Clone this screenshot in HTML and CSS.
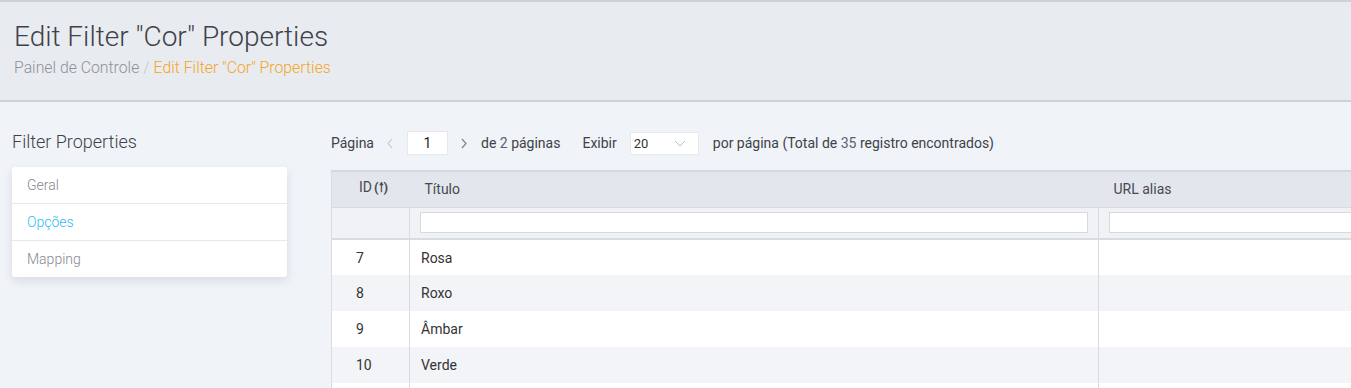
FILE: index.html
```html
<!DOCTYPE html>
<html lang="pt">
<head>
<meta charset="utf-8">
<title>Edit Filter "Cor" Properties</title>
<link rel="stylesheet" href="styles.css">
</head>
<body>
<header class="page-header">
  <h1 class="page-title">Edit Filter "Cor" Properties</h1>
  <div class="breadcrumb"><span class="crumb">Painel de Controle</span><span class="sep">/</span><span class="crumb-active">Edit Filter "Cor" Properties</span></div>
</header>
<main class="main">
  <aside class="sidebar">
    <h2 class="side-title">Filter Properties</h2>
    <ul class="side-menu">
      <li class="side-item">Geral</li>
      <li class="side-item active">Opções</li>
      <li class="side-item">Mapping</li>
    </ul>
  </aside>
  <section class="content">
    <div class="pager">
      <span class="pg-label">Página</span>
      <span class="pg-arrow"><svg width="8" height="11" viewBox="0 0 8 11"><path d="M6 1L2 5.5 6 10" fill="none" stroke="#cdd1d7" stroke-width="1.2"/></svg></span>
      <span class="pg-input">1</span>
      <span class="pg-arrow"><svg width="8" height="11" viewBox="0 0 8 11"><path d="M2 1l4 4.5L2 10" fill="none" stroke="#7d838d" stroke-width="1.2"/></svg></span>
      <span class="pg-label">de <span class="num">2</span> páginas</span>
      <span class="pg-label pg-show">Exibir</span>
      <span class="pg-select">20<svg class="chev" width="12" height="7" viewBox="0 0 12 7"><path d="M1 1l5 5 5-5" fill="none" stroke="#b8bcc4" stroke-width="1"/></svg></span>
      <span class="pg-label">por página (Total de <span class="num">35</span> registro encontrados)</span>
    </div>
    <table class="grid">
      <colgroup><col class="c-id"><col class="c-title"><col class="c-url"></colgroup>
      <thead>
        <tr class="head-row">
          <th class="th-id">ID<span class="sort">(&#x1F811;)</span></th>
          <th class="th">Título</th>
          <th class="th">URL alias</th>
        </tr>
        <tr class="filter-row">
          <td class="fc"></td>
          <td class="fc"><span class="finput"></span></td>
          <td class="fc"><span class="finput"></span></td>
        </tr>
      </thead>
      <tbody>
        <tr class="row"><td class="td-id">7</td><td class="td">Rosa</td><td class="td"></td></tr>
        <tr class="row alt"><td class="td-id">8</td><td class="td">Roxo</td><td class="td"></td></tr>
        <tr class="row"><td class="td-id">9</td><td class="td">Âmbar</td><td class="td"></td></tr>
        <tr class="row alt"><td class="td-id">10</td><td class="td">Verde</td><td class="td"></td></tr>
        <tr class="row"><td class="td-id"></td><td class="td"></td><td class="td"></td></tr>
      </tbody>
    </table>
  </section>
</main>
</body>
</html>
```

FILE: styles.css
```css
* { box-sizing: border-box; }
html, body { margin: 0; padding: 0; }
body {
  background: #f0f3f8;
  font-family: Roboto, "Liberation Sans", sans-serif;
  color: #444;
  overflow: hidden;
  width: 1351px;
  height: 388px;
}
.page-header {
  background: #e8ebf0;
  border-top: 2px solid #cfd1d5;
  border-bottom: 2px solid #cdd0d4;
  height: 102px;
  padding: 17px 14px 0;
}
.page-title {
  margin: 0;
  font-size: 28px;
  font-weight: 300;
  line-height: 36px;
  color: #3e4248;
}
.breadcrumb {
  margin-top: 3px;
  font-size: 15.8px;
  font-weight: 300;
  line-height: 20px;
  color: #8f9297;
}
.sep { margin: 0 4px; color: #c4c6ca; }
.crumb-active { color: #f5a623; }
.main {
  display: flex;
  padding-top: 28px;
}
.sidebar {
  width: 275px;
  margin-left: 12px;
  flex: none;
}
.side-title {
  margin: 0;
  font-size: 18px;
  font-weight: 300;
  line-height: 24px;
  color: #3e4248;
}
.side-menu {
  list-style: none;
  margin: 13px 0 0;
  padding: 0;
  background: #fff;
  border-radius: 3px;
  box-shadow: 0 4px 10px rgba(60, 70, 90, 0.13);
}
.side-item {
  height: 37px;
  line-height: 36px;
  padding-left: 15px;
  font-size: 14px;
  font-weight: 300;
  color: #85888d;
  border-top: 1px solid #e6e8ec;
}
.side-item:first-child { border-top: none; height: 36px; }
.side-item.active { color: #2ebcf0; }
.content {
  margin-left: 44px;
  flex: none;
  width: 1100px;
}
.pager {
  display: flex;
  align-items: center;
  height: 24px;
  margin-top: 1px;
  font-size: 14px;
  color: #3e4248;
}
.pg-label { white-space: nowrap; }
.num { color: #5a6070; }
.pg-arrow {
  width: 33px;
  display: flex;
  justify-content: center;
  align-items: center;
}
.pg-arrow svg { display: block; }
.pg-input {
  width: 41px;
  height: 24px;
  background: #fff;
  border: 1px solid #e6e8ec;
  text-align: center;
  line-height: 22px;
  color: #222;
}
.pg-show { margin-left: 22px; margin-right: 13px; }
.pg-select {
  width: 69px;
  height: 23px;
  background: #fff;
  border: 1px solid #e6e8ec;
  padding-left: 3px;
  line-height: 21px;
  font-size: 13px;
  color: #333;
  display: flex;
  align-items: center;
  justify-content: space-between;
  padding-right: 12px;
  margin-right: 14px;
}
.chev { display: block; }
.grid {
  margin-top: 15px;
  width: 1100px;
  border-collapse: collapse;
  table-layout: fixed;
  border-top: 2px solid #d5d8de;
  border-left: 1px solid #d8dbe1;
  font-size: 14px;
  color: #333;
}
.c-id { width: 78px; }
.c-title { width: 689px; }
.head-row { background: #e3e6ed; height: 36px; }
.th, .th-id {
  font-weight: 400;
  text-align: left;
  color: #464a50;
  padding: 0 0 0 15px;
  border-bottom: 1px solid #d8dbe1;
}
.th-id { padding-left: 27px; }
.sort { font-size: 13px; margin-left: 2px; font-weight: 700; }
.filter-row { background: #f0f2f6; height: 32px; }
.fc {
  border-right: 1px solid #d8dbe1;
  border-bottom: 2px solid #d8dbe1;
  padding: 0 10px;
  vertical-align: middle;
}
.finput {
  display: block;
  height: 21px;
  background: #fff;
  border: 1px solid #d6d9de;
}
.row { height: 36px; background: #fff; }
.row.alt { background: #f3f4f8; }
.td-id, .td {
  border-right: 1px solid #d8dbe1;
  padding: 0 0 0 11px;
  color: #333;
}
.td-id { padding-left: 24px; }
```
